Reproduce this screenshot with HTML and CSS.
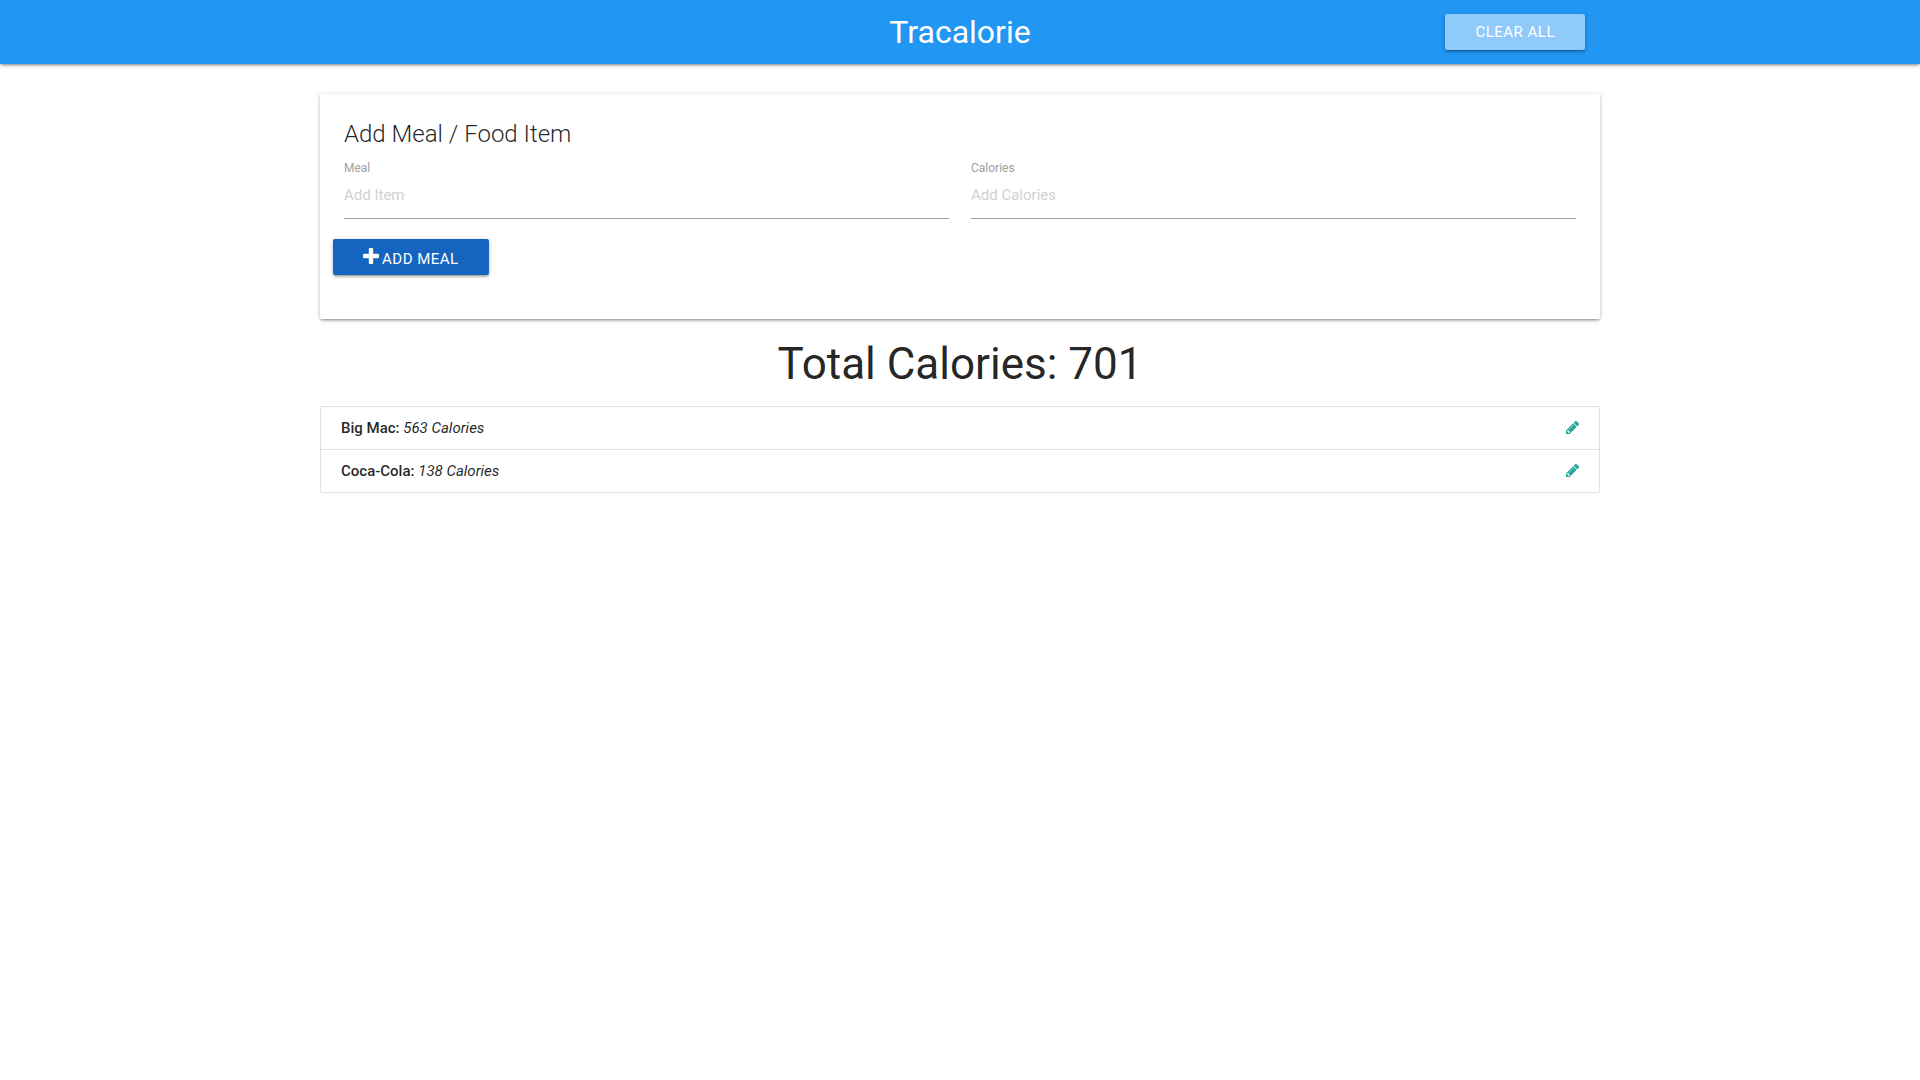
FILE: index.html
```html
<!DOCTYPE html>
<html lang="en">
<head>
  <meta charset="utf-8">
  <meta name="viewport" content="width=device-width, initial-scale=1">
  <title>Tracalorie</title>
  <link rel="stylesheet" href="styles.css">
</head>
<body>
  <nav class="navbar">
    <div class="container navbar-inner">
      <a class="brand" href="#">Tracalorie</a>
      <button class="btn btn-clear" type="button">Clear All</button>
    </div>
  </nav>

  <main class="container">
    <section class="card">
      <h1 class="card-title">Add Meal / Food Item</h1>
      <form class="meal-form">
        <div class="fields">
          <div class="field">
            <label for="item-name">Meal</label>
            <input id="item-name" type="text" placeholder="Add Item">
          </div>
          <div class="field">
            <label for="item-calories">Calories</label>
            <input id="item-calories" type="text" inputmode="numeric" placeholder="Add Calories">
          </div>
        </div>
        <button class="btn btn-add" type="button">
          <svg class="icon-plus" viewBox="192 128 1408 1408" aria-hidden="true"><path d="M1600 736v192q0 40-28 68t-68 28h-416v416q0 40-28 68t-68 28h-192q-40 0-68-28t-28-68v-416h-416q-40 0-68-28t-28-68v-192q0-40 28-68t68-28h416v-416q0-40 28-68t68-28h192q40 0 68 28t28 68v416h416q40 0 68 28t28 68z"/></svg>
          <span>Add Meal</span>
        </button>
      </form>
    </section>

    <h2 class="total">Total Calories: <span>701</span></h2>

    <ul class="collection">
      <li class="collection-item">
        <span><strong>Big Mac:</strong> <em>563 Calories</em></span>
        <a class="edit" href="#" aria-label="Edit Big Mac"><svg class="icon-pencil" viewBox="128 149 1515 1515" aria-hidden="true"><path d="M491 1536l91-91-235-235-91 91v107h128v128h107zm523-928q0-22-22-22-10 0-17 7l-542 542q-7 7-7 17 0 22 22 22 10 0 17-7l542-542q7-7 7-17zm-54-192l416 416-832 832h-416v-416zm683 96q0 53-37 90l-166 166-416-416 166-165q36-38 90-38 53 0 91 38l235 234q37 39 37 91z"/></svg></a>
      </li>
      <li class="collection-item">
        <span><strong>Coca-Cola:</strong> <em>138 Calories</em></span>
        <a class="edit" href="#" aria-label="Edit Coca-Cola"><svg class="icon-pencil" viewBox="128 149 1515 1515" aria-hidden="true"><path d="M491 1536l91-91-235-235-91 91v107h128v128h107zm523-928q0-22-22-22-10 0-17 7l-542 542q-7 7-7 17 0 22 22 22 10 0 17-7l542-542q7-7 7-17zm-54-192l416 416-832 832h-416v-416zm683 96q0 53-37 90l-166 166-416-416 166-165q36-38 90-38 53 0 91 38l235 234q37 39 37 91z"/></svg></a>
      </li>
    </ul>
  </main>
</body>
</html>
```
FILE: styles.css
```css
*, *::before, *::after {
  box-sizing: border-box;
}

body {
  margin: 0;
  background: #fff;
  color: rgba(0, 0, 0, 0.87);
  font-family: Roboto, sans-serif;
  font-size: 15px;
  line-height: 22px;
}

.container {
  width: 90%;
  max-width: 1280px;
  margin: 0 auto;
}

.navbar,
.card,
.btn {
  box-shadow: 0 2px 2px 0 rgba(0, 0, 0, 0.14),
    0 3px 1px -2px rgba(0, 0, 0, 0.12),
    0 1px 5px 0 rgba(0, 0, 0, 0.2);
}

.navbar {
  background: #2196f3;
}

.navbar-inner {
  display: grid;
  grid-template-columns: 1fr auto 1fr;
  align-items: center;
  min-height: 64px;
  padding: 0 15px;
}

.brand {
  grid-column: 2;
  color: #fff;
  font-size: 32px;
  line-height: 64px;
  text-decoration: none;
}

.btn {
  height: 36px;
  padding: 0 30px;
  border: 0;
  border-radius: 2px;
  color: #fff;
  font-family: inherit;
  font-size: 15px;
  line-height: 36px;
  letter-spacing: 0.5px;
  text-transform: uppercase;
  cursor: pointer;
}

.btn-clear {
  justify-self: end;
  background: #90caf9;
}

.card {
  margin-top: 30px;
  padding: 24px 24px 44px;
  border-radius: 2px;
}

.card-title {
  margin: 0;
  font-size: 24px;
  font-weight: 300;
  line-height: 32px;
}

.fields {
  display: grid;
  grid-template-columns: 1fr 1fr;
  gap: 22px;
  padding-top: 9px;
}

.field {
  display: flex;
  flex-direction: column;
}

.field label {
  color: #9e9e9e;
  font-size: 12px;
  line-height: 18px;
}

.field input {
  width: 100%;
  height: 42px;
  padding: 0 0 5px;
  border: 0;
  border-bottom: 1px solid #9e9e9e;
  background: transparent;
  font-family: inherit;
  font-size: 15px;
}

.field input::placeholder {
  color: #d1d1d1;
}

.btn-add {
  display: flex;
  align-items: center;
  gap: 3px;
  margin: 20px 0 0 -11px;
  background: #1565c0;
}

.btn-add span {
  line-height: 32px;
  padding-top: 4px;
}

.icon-plus {
  width: 16px;
  height: 16px;
  margin-bottom: 2px;
  fill: currentColor;
}

.total {
  margin: 20px 0 17px;
  font-size: 44px;
  font-weight: 400;
  line-height: 50px;
  text-align: center;
}

.collection {
  margin: 0;
  padding: 0;
  border: 1px solid #e0e0e0;
  border-radius: 2px;
  list-style: none;
}

.collection-item {
  display: flex;
  align-items: center;
  justify-content: space-between;
  padding: 10px 20px;
}

.collection-item + .collection-item {
  border-top: 1px solid #e0e0e0;
}

.collection-item strong {
  font-weight: 500;
}

.collection-item em {
  font-weight: 400;
}

.edit {
  display: flex;
  padding-bottom: 1px;
  color: #26a69a;
}

.icon-pencil {
  width: 13px;
  height: 13px;
  fill: currentColor;
}
```
